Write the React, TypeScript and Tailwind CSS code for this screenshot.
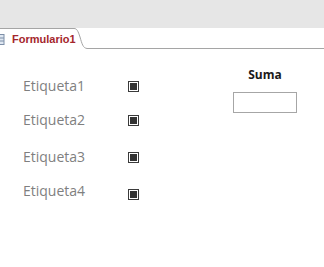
const rows = [
  { label: 'Etiqueta1', mt: 'mt-0', box: '' },
  { label: 'Etiqueta2', mt: 'mt-[14px]', box: '' },
  { label: 'Etiqueta3', mt: 'mt-[17px]', box: '' },
  { label: 'Etiqueta4', mt: 'mt-[14px]', box: 'mt-[6px]' },
];

const Check = ({ extra }: { extra: string }) => (
  <span className={`flex h-[11px] w-[11px] items-center justify-center border border-[#3a3a3a] bg-white ${extra}`}>
    <span className="h-[7px] w-[7px] bg-[#333333]" />
  </span>
);

export default function App() {
  return (
    <div className="h-[267px] w-[324px] overflow-hidden bg-white font-['Open_Sans',sans-serif]">
      {/* ribbon area */}
      <div className="h-[28px] bg-[#e6e6e6]" />

      {/* tab strip */}
      <div className="flex h-[21px]">
        <div className="flex w-[72px] items-center gap-[7px] border-t border-[#a5a5a5] bg-white">
          <svg width="5" height="11" viewBox="0 0 5 11" className="shrink-0">
            <rect x="-6" y="0.5" width="10" height="10" fill="#dfe7f1" stroke="#7d8fa8" />
            <line x1="-5" y1="4" x2="4" y2="4" stroke="#7d8fa8" />
            <line x1="-5" y1="7" x2="4" y2="7" stroke="#7d8fa8" />
          </svg>
          <span className="font-['Liberation_Sans',sans-serif] text-[11px] leading-none font-bold text-[#a4262c]">Formulario1</span>
        </div>
        <svg width="17" height="21" viewBox="0 0 17 21" className="shrink-0">
          <path d="M0 0.5 H2 C5 0.5 6 3 8 9 C10 16 11 20 15 20.5 H17" fill="white" stroke="#a5a5a5" />
        </svg>
        <div className="flex-1 border-b border-[#a5a5a5]" />
      </div>

      {/* form body */}
      <div className="flex">
        <div className="flex w-[150px] flex-col pt-[27px] pl-[23px]">
          {rows.map((r) => (
            <div key={r.label} className={`flex h-[20px] items-center ${r.mt}`}>
              <span className="w-[105px] text-[14px] leading-none text-[#7f7f7f]">{r.label}</span>
              <Check extra={r.box} />
            </div>
          ))}
        </div>
        <div className="ml-auto mr-[27px] flex w-[64px] flex-col items-center pt-[18px]">
          <span className="h-[16px] text-[12px] leading-[16px] font-bold text-[#1a1a1a]">Suma</span>
          <div className="mt-[9px] h-[21px] w-[64px] border border-[#a6a6a6] bg-white" />
        </div>
      </div>
    </div>
  );
}
